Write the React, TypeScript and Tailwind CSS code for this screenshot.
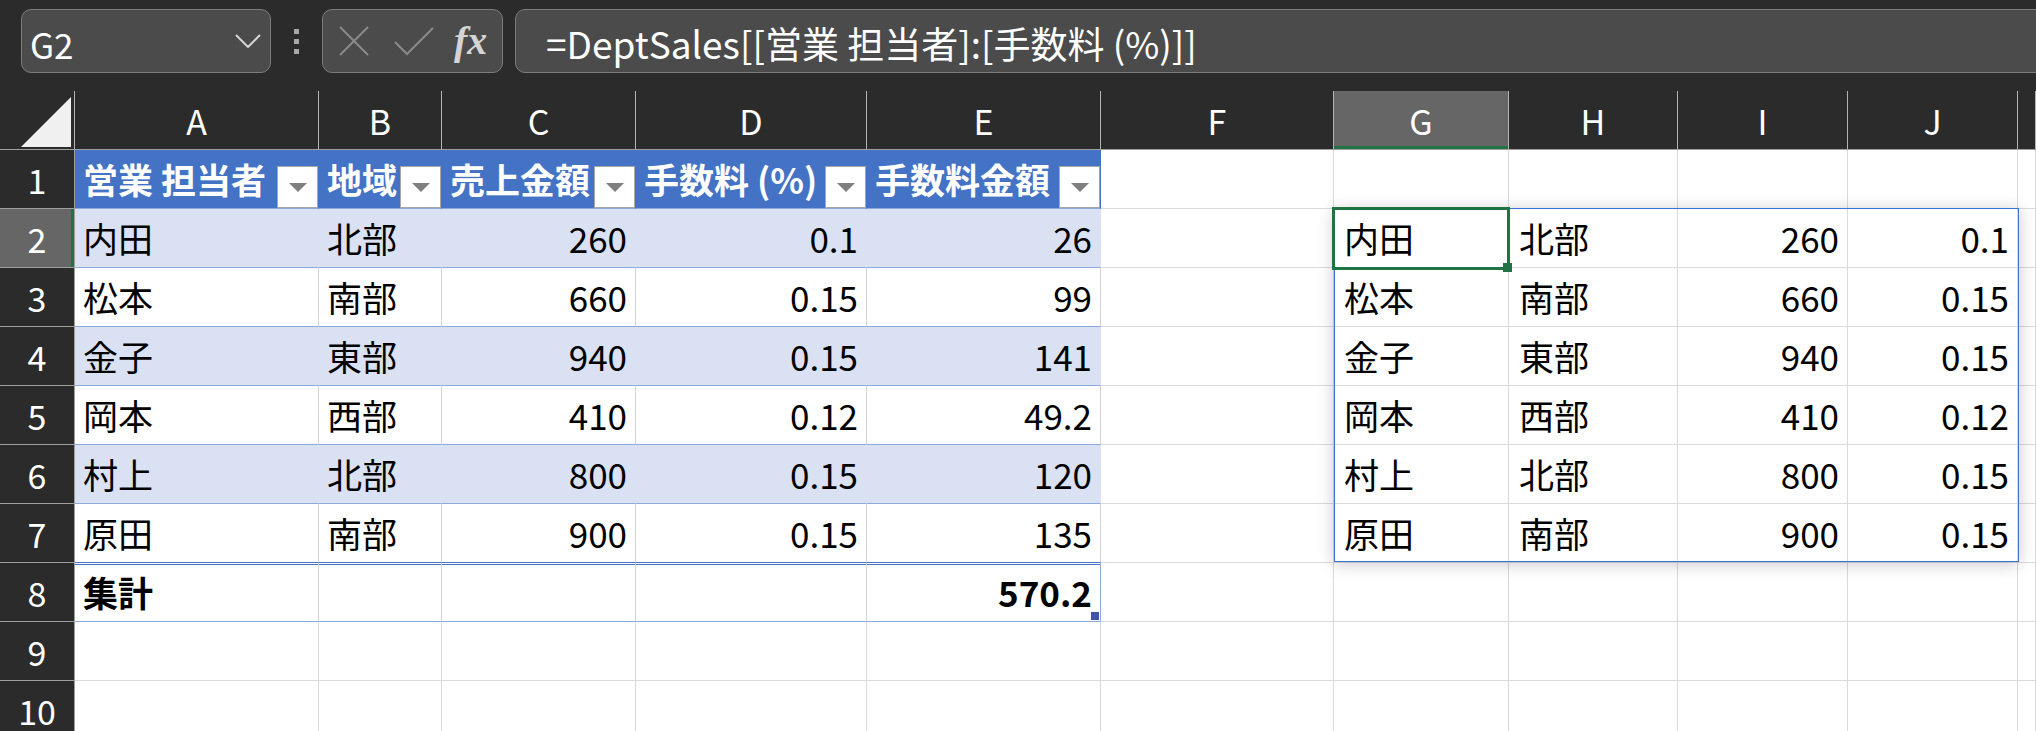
import React from "react";

const COL_W = [
  "w-[244px]",
  "w-[123px]",
  "w-[194px]",
  "w-[231px]",
  "w-[234px]",
  "w-[233px]",
  "w-[175px]",
  "w-[169px]",
  "w-[170px]",
  "w-[170px]",
];
// last entry is the partly visible column past J, its letter is hidden
const LETTERS = ["A", "B", "C", "D", "E", "F", "G", "H", "I", "J", ""];

const TABLE_HEAD = ["営業 担当者", "地域", "売上金額", "手数料 (%)", "手数料金額"];

const SALES = [
  ["内田", "北部", "260", "0.1", "26"],
  ["松本", "南部", "660", "0.15", "99"],
  ["金子", "東部", "940", "0.15", "141"],
  ["岡本", "西部", "410", "0.12", "49.2"],
  ["村上", "北部", "800", "0.15", "120"],
  ["原田", "南部", "900", "0.15", "135"],
];

const CELL = "h-full shrink-0 flex items-center px-[8px] border-r border-b whitespace-nowrap overflow-hidden";
const GRID = "bg-white border-r-[#dadada] border-b-[#dadada]";

function colWidth(i: number) {
  return i < COL_W.length ? COL_W[i] : "flex-1 min-w-0";
}

function RowHeader({ n, active }: { n: number; active?: boolean }) {
  return (
    <div
      className={`w-[75px] h-full shrink-0 flex items-center justify-center border-r border-b border-r-[#9e9e9e] border-b-[#9e9e9e] text-white text-[34px] ${
        active ? "bg-[#666666] shadow-[inset_-3px_0_0_#217346]" : "bg-[#2b2b2b]"
      }`}
    >
      {n}
    </div>
  );
}

function FilterButton() {
  return (
    <div className="self-end w-[41px] h-[42px] shrink-0 bg-white border border-[#a6a6a6] flex items-center justify-center">
      <svg width="18" height="9" viewBox="0 0 18 9">
        <polygon points="0,0 18,0 9,9" fill="#7f7f7f" />
      </svg>
    </div>
  );
}

function EmptyCells({ from }: { from: number }) {
  return (
    <>
      {LETTERS.slice(from).map((_, j) => (
        <div key={j} className={`${CELL} ${GRID} ${colWidth(from + j)}`} />
      ))}
    </>
  );
}

function FormulaBar() {
  return (
    <div className="h-[91px] bg-[#2b2b2b] flex items-start pt-[9px] pl-[21px] overflow-hidden">
      <div className="w-[250px] h-[64px] shrink-0 rounded-[10px] border border-[#7c7c7c] bg-[#4b4b4b] flex items-center justify-between pl-[8px] pr-[9px]">
        <span className="text-[35px] text-white leading-none pt-[4px]">G2</span>
        <svg width="26" height="14" viewBox="0 0 26 14">
          <polyline points="1,1 13,13 25,1" fill="none" stroke="#d4d4d4" strokeWidth="2" />
        </svg>
      </div>
      <div className="w-[51px] h-[64px] shrink-0 flex flex-col items-center justify-center gap-[5px]">
        <div className="w-[5px] h-[5px] bg-[#a8a8a8]" />
        <div className="w-[5px] h-[5px] bg-[#a8a8a8]" />
        <div className="w-[5px] h-[5px] bg-[#a8a8a8]" />
      </div>
      <div className="w-[181px] h-[64px] shrink-0 rounded-[10px] border border-[#7c7c7c] bg-[#4b4b4b] flex items-center pl-[16px]">
        <svg width="30" height="30" viewBox="0 0 30 30">
          <line x1="1" y1="1" x2="29" y2="29" stroke="#8a8a8a" strokeWidth="2" />
          <line x1="29" y1="1" x2="1" y2="29" stroke="#8a8a8a" strokeWidth="2" />
        </svg>
        <svg width="40" height="30" viewBox="0 0 40 30" className="ml-[25px]">
          <polyline points="1,16 13,28 39,2" fill="none" stroke="#8a8a8a" strokeWidth="2" />
        </svg>
        <span className="ml-[20px] font-['Liberation_Serif',serif] italic font-bold text-[40px] leading-none text-[#d4d4d4]">
          fx
        </span>
      </div>
      <div className="ml-[12px] flex-1 h-[64px] -mr-[2px] rounded-l-[10px] border border-[#7c7c7c] bg-[#4b4b4b] flex items-center pl-[30px]">
        <span className="text-[37px] text-white leading-none whitespace-nowrap pt-[4px]">
          =DeptSales[[営業 担当者]:[手数料 (%)]]
        </span>
      </div>
    </div>
  );
}

function ColumnHeaders() {
  return (
    <div className="flex h-[59px] bg-[#2b2b2b] border-b border-[#a0a0a0]">
      <div className="w-[75px] h-full shrink-0 flex items-end justify-end pr-[3px] pb-[2px] border-r border-[#b4b4b4]">
        <svg width="50" height="50" viewBox="0 0 50 50">
          <polygon points="50,0 50,50 0,50" fill="#f0f0f0" />
        </svg>
      </div>
      {LETTERS.map((l, i) => (
        <div
          key={i}
          className={`h-full shrink-0 flex items-center justify-center border-r border-[#b4b4b4] text-white text-[34px] ${colWidth(i)} ${
            l === "G" ? "bg-[#666666] shadow-[inset_0_-3px_0_#217346]" : ""
          }`}
        >
          {l}
        </div>
      ))}
    </div>
  );
}

function TableHeaderRow() {
  return (
    <div className="flex h-[59px]">
      <RowHeader n={1} />
      {TABLE_HEAD.map((h, i) => (
        <div
          key={h}
          className={`${CELL} ${colWidth(i)} pr-0 justify-between bg-[#4472c4] border-r-[#4472c4] border-b-[#8ea9db] text-white font-bold text-[35px]`}
        >
          <span>{h}</span>
          <FilterButton />
        </div>
      ))}
      <EmptyCells from={5} />
    </div>
  );
}

function DataRow({ idx }: { idx: number }) {
  const row = SALES[idx];
  const n = idx + 2;
  const banded = n % 2 === 0;
  const last = idx === SALES.length - 1;
  const band = banded ? "bg-[#d9e1f2] border-r-[#d9e1f2]" : "bg-white border-r-[#d4d4d4]";
  const bottom = last ? "border-b-[#4472c4]" : "border-b-[#8ea9db]";
  return (
    <div className="flex h-[59px]">
      <RowHeader n={n} active={n === 2} />
      {row.map((v, i) => (
        <div
          key={i}
          className={`${CELL} ${colWidth(i)} ${band} ${bottom} ${i === 4 ? "border-r-[#8ea9db]" : ""} ${
            i >= 2 ? "justify-end" : "justify-start"
          } text-[35px] text-black`}
        >
          {v}
        </div>
      ))}
      <div className={`${CELL} ${GRID} ${colWidth(5)}`} />
      {row.slice(0, 4).map((v, i) => (
        <div
          key={`g${i}`}
          className={`${CELL} ${GRID} ${colWidth(6 + i)} ${i >= 2 ? "justify-end" : "justify-start pl-[10px]"} text-[35px] text-black ${
            n === 2 && i === 0 ? "relative overflow-visible" : ""
          }`}
        >
          {v}
          {n === 2 && i === 0 && (
            <>
              <div className="absolute left-0 top-[-1px] w-[685px] h-[354px] border border-[#3f73d3] shadow-[0_2px_16px_rgba(0,0,0,0.22)] pointer-events-none" />
              <div className="absolute left-[-2px] top-[-2px] w-[178px] h-[63px] border-[3px] border-[#217346] pointer-events-none">
                <div className="absolute right-[-5px] bottom-[-5px] w-[9px] h-[9px] bg-[#217346]" />
              </div>
            </>
          )}
        </div>
      ))}
      <div className={`${CELL} ${GRID} ${colWidth(10)}`} />
    </div>
  );
}

function TotalRow() {
  const top = "bg-white shadow-[inset_0_1px_0_#ffffff,inset_0_2px_0_#4472c4] border-b-[#8ea9db]";
  return (
    <div className="flex h-[59px]">
      <RowHeader n={8} />
      {[0, 1, 2, 3, 4].map((i) => (
        <div
          key={i}
          className={`${CELL} ${colWidth(i)} ${top} ${i === 4 ? "border-r-[#8ea9db] justify-end relative overflow-visible" : "border-r-[#d4d4d4]"} font-bold text-[35px] text-black`}
        >
          {i === 0 && "集計"}
          {i === 4 && (
            <>
              570.2
              <div className="absolute right-[1px] bottom-[1px] w-[8px] h-[8px] bg-[#4055a8]" />
            </>
          )}
        </div>
      ))}
      <EmptyCells from={5} />
    </div>
  );
}

function BlankRow({ n }: { n: number }) {
  return (
    <div className="flex h-[59px]">
      <RowHeader n={n} />
      <EmptyCells from={0} />
    </div>
  );
}

export default function App() {
  return (
    <div className="w-[2036px] h-[731px] overflow-hidden bg-white font-['Noto_Sans_CJK_JP','Noto_Sans',sans-serif]">
      <FormulaBar />
      <ColumnHeaders />
      <TableHeaderRow />
      {SALES.map((_, i) => (
        <DataRow key={i} idx={i} />
      ))}
      <TotalRow />
      <BlankRow n={9} />
      <BlankRow n={10} />
    </div>
  );
}
